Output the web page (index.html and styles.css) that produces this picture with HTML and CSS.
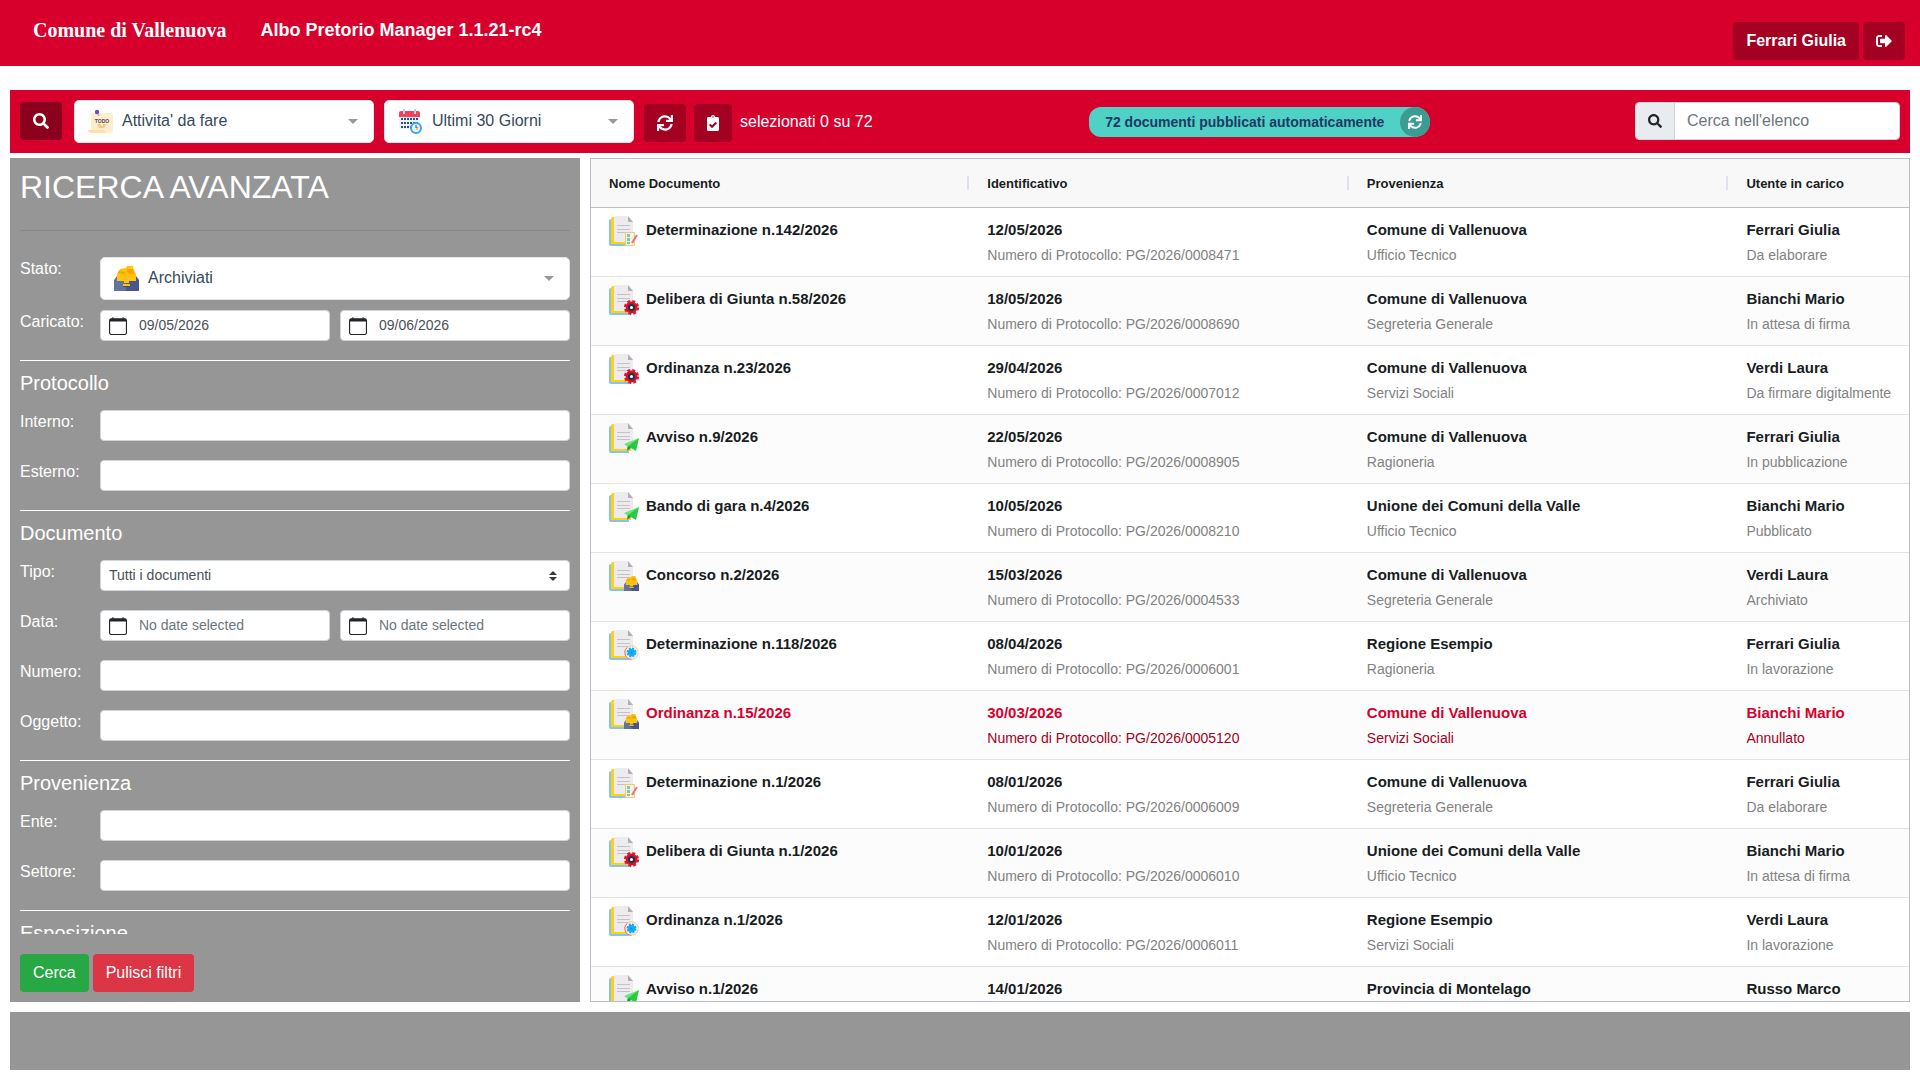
FILE: index.html
```html
<!DOCTYPE html>
<html lang="it">
<head>
    <meta charset="UTF-8">
    <meta name="viewport" content="width=device-width, initial-scale=1.0">
    <title>Albo Pretorio Manager</title>
    <link rel="stylesheet" href="styles.css">
</head>
<body>

<!-- icone condivise -->
<svg class="sprite" aria-hidden="true">
    <symbol id="i-search" viewBox="0 0 512 512">
        <path fill="currentColor" d="M505 442.700L405.300 343c-4.500-4.500-10.600-7-17-7H372c27.600-35.300 44-79.700 44-128C416 93.100 322.900 0 208 0S0 93.100 0 208s93.100 208 208 208c48.300 0 92.700-16.400 128-44v16.300c0 6.400 2.500 12.500 7 17l99.700 99.700c9.400 9.400 24.600 9.400 33.900 0l28.300-28.300c9.400-9.400 9.400-24.600.1-34zM208 336c-70.700 0-128-57.200-128-128 0-70.700 57.200-128 128-128 70.700 0 128 57.200 128 128 0 70.700-57.200 128-128 128z"/>
    </symbol>
    <symbol id="i-sync" viewBox="0 0 512 512">
        <path fill="currentColor" d="M440.650 12.570l4 82.770A247.160 247.160 0 0 0 255.830 8C134.730 8 33.910 94.920 12.290 209.820A12 12 0 0 0 24.090 224h49.050a12 12 0 0 0 11.670-9.260 175.910 175.910 0 0 1 317-56.940l-101.460-4.860a12 12 0 0 0-12.570 12v47.410a12 12 0 0 0 12 12H500a12 12 0 0 0 12-12V12a12 12 0 0 0-12-12h-47.370a12 12 0 0 0-11.980 12.570zM255.830 432a175.610 175.610 0 0 1-146-77.800l101.800 4.870a12 12 0 0 0 12.570-12v-47.400a12 12 0 0 0-12-12H12a12 12 0 0 0-12 12V500a12 12 0 0 0 12 12h47.350a12 12 0 0 0 12-12.600l-4.150-82.570A247.170 247.170 0 0 0 255.830 504c121.110 0 221.930-86.920 243.550-201.820a12 12 0 0 0-11.800-14.180h-49.050a12 12 0 0 0-11.670 9.260A175.860 175.860 0 0 1 255.830 432z"/>
    </symbol>
    <symbol id="i-clipboard" viewBox="0 0 384 512">
        <path fill="currentColor" d="M336 64h-80c0-35.300-28.700-64-64-64s-64 28.700-64 64H48C21.500 64 0 85.500 0 112v352c0 26.500 21.500 48 48 48h288c26.500 0 48-21.500 48-48V112c0-26.500-21.500-48-48-48zM192 40c13.300 0 24 10.700 24 24s-10.700 24-24 24-24-10.700-24-24 10.700-24 24-24zm121.200 231.800l-143 141.800c-4.700 4.700-12.300 4.600-17-.1l-82.600-83.300c-4.700-4.700-4.600-12.300.1-17L99.100 285c4.700-4.700 12.300-4.600 17 .1l46 46.400 106-105.200c4.700-4.700 12.300-4.600 17 .1l28.200 28.400c4.700 4.800 4.600 12.300-.1 17z"/>
    </symbol>
    <symbol id="i-logout" viewBox="0 0 512 512">
        <path fill="currentColor" d="M497 273L329 441c-15 15-41 4.500-41-17v-96H152c-13.300 0-24-10.700-24-24v-96c0-13.300 10.700-24 24-24h136V88c0-21.400 25.900-32 41-17l168 168c9.300 9.400 9.300 24.600 0 34zM192 436v-40c0-6.600-5.400-12-12-12H96c-17.700 0-32-14.300-32-32V160c0-17.700 14.300-32 32-32h84c6.600 0 12-5.400 12-12V76c0-6.600-5.400-12-12-12H96c-53 0-96 43-96 96v192c0 53 43 96 96 96h84c6.600 0 12-5.400 12-12z"/>
    </symbol>
    <symbol id="i-calendar" viewBox="0 0 16 16">
        <path fill="currentColor" d="M3.500 0a.5.500 0 0 1 .5.500V1h8V.500a.5.500 0 0 1 1 0V1h1a2 2 0 0 1 2 2v11a2 2 0 0 1-2 2H2a2 2 0 0 1-2-2V3a2 2 0 0 1 2-2h1V.500a.5.500 0 0 1 .5-.5zM1 4v10a1 1 0 0 0 1 1h12a1 1 0 0 0 1-1V4H1z"/>
    </symbol>
    <symbol id="i-month" viewBox="0 0 25 25">
        <path fill="#edf3fb" d="M1 7h21v13H1z"/>
        <path fill="#f4405a" d="M1 4q0-2 2-2h17q2 0 2 2v4H1z"/>
        <path fill="#a9d5f5" d="M5 0h2v5H5zM16 0h2v5h-2z"/>
        <path fill="none" stroke="#2f4e80" stroke-width="2" stroke-dasharray="2 1" d="M3 10h17M3 14h17M3 18h10"/>
        <circle cx="18" cy="19" r="5" fill="#e8f4ff" stroke="#3fa2f3" stroke-width="2"/>
        <path fill="none" stroke="#2f4e80" d="M18 16v3h2"/>
        <path fill="#f9c54a" d="M18 19h2v2h-2z"/>
    </symbol>
    <symbol id="i-archive" viewBox="0 0 25 25">
        <path fill="#ffc40c" d="M3 12V8l3-5 6-1 1-2h6v2l3 6v9H3z"/>
        <path fill="#ff9e00" d="M13 3h6l1 5h-4l-3-2zM5 5l6 1-1 2-6-1z"/>
        <path fill="#63739f" d="M0 14l3-4v5h7v2h3v8H0z"/>
        <path fill="#475690" d="M25 14l-3-4v5h-7v2h-3v8h13z"/>
        <path fill="#ffc40c" d="M9 18h7v2H9z"/>
        <path fill="#3d4b75" d="M9 20h7v1H9z"/>
    </symbol>
    <symbol id="i-doc" viewBox="0 0 30 30">
        <path fill="#82c4f2" d="M0 5q0-2 2-2h2v23h16v4H2q-2 0-2-2z"/>
        <path fill="#ffd015" d="M2 3q0-2 2-2h2v24h16v3H2z"/>
        <path fill="#edebee" d="M5 2q0-2 2-2h12l5 6v20H5z"/>
        <path fill="#b3aeb6" d="M19 0l5 6h-5z"/>
        <path fill="none" stroke="#c6c2c8" d="M8 9.500h13M8 13.500h13M8 16.500h13"/>
    </symbol>
    <symbol id="b-edit" viewBox="0 0 30 30">
        <path fill="#f7f2e7" stroke="#f1c778" d="M16.500 16.500h9v13h-9z"/>
        <path fill="none" stroke="#7dc9a4" stroke-width="3" stroke-dasharray="3 1" d="M19.500 18v10"/>
        <path fill="none" stroke="#ee7280" stroke-width="2" d="M28 19l-5 8"/>
    </symbol>
    <symbol id="b-gear" viewBox="0 0 30 30">
        <circle cx="22.500" cy="22.500" r="6.300" fill="none" stroke="#e5152f" stroke-width="2.500" stroke-dasharray="2.900 2.050"/>
        <circle cx="22.500" cy="22.500" r="5.900" fill="#d3142c"/>
        <circle cx="22.500" cy="22.500" r="2.500" fill="#fff" stroke="#1d3649" stroke-width="2"/>
    </symbol>
    <symbol id="b-send" viewBox="0 0 30 30">
        <path fill="#6be673" d="M30 15L15 21l4 3z"/>
        <path fill="#29c942" d="M30 15L19 23l-1 3 4-1 5 3z"/>
        <path fill="#1d9c34" d="M19 23l-1 5 4-3z"/>
    </symbol>
    <symbol id="b-archive" viewBox="0 0 30 30">
        <use href="#i-archive" x="15" y="15" width="15" height="15"/>
    </symbol>
    <symbol id="b-work" viewBox="0 0 30 30">
        <circle cx="22.500" cy="22.500" r="6.800" fill="#f7f3f2" stroke="#f5c795"/>
        <path fill="none" stroke="#ef7065" d="M18 17.500a6.800 6.800 0 0 0 4.500 11.800"/>
        <circle cx="22.500" cy="22.500" r="4" fill="none" stroke="#12aef5" stroke-width="2" stroke-dasharray="2 1.140"/>
        <circle cx="22.500" cy="22.500" r="3.800" fill="#12aef5"/>
        <circle cx="22.500" cy="22.500" r="1" fill="#2d7fd0"/>
    </symbol>
</svg>

<header class="topbar">
    <span class="ente">Comune di Vallenuova</span>
    <span class="app-name">Albo Pretorio Manager 1.1.21-rc4</span>
    <div class="user">
        <button type="button" class="btn btn-dark">Ferrari Giulia</button>
        <button type="button" class="btn btn-dark" aria-label="Esci"><svg class="icon"><use href="#i-logout"/></svg></button>
    </div>
</header>

<div class="page">
    <div class="toolbar">
        <button type="button" class="btn btn-dark btn-search" aria-label="Ricerca avanzata"><svg class="icon"><use href="#i-search"/></svg></button>
        <div class="dropdown dropdown-tasks">
            <svg class="dropdown-icon" viewBox="0 0 25 25">
                <path fill="#ffeecb" d="M3 4h19a3 3 0 0 1 3 3v15a2 2 0 0 1-2 2H3z"/>
                <path fill="#ffe0a0" d="M0 21h17q0 3 3 3H3q-3 0-3-3z"/>
                <path fill="#fbc78f" d="M10 15h3v2h2v-2h3v1l-2 3h-5l-2-3z"/>
                <path fill="#b9a4e6" d="M9 4l3 2-2 1z"/>
                <circle cx="9" cy="3" r="2.200" fill="#6a4bc3"/>
                <text x="14" y="14" text-anchor="middle" class="todo-text">TODO</text>
            </svg>
            <select id="tasks" aria-label="Attivita'">
                <option>Attivita' da fare</option>
            </select>
        </div>
        <div class="dropdown dropdown-period">
            <svg class="dropdown-icon"><use href="#i-month"/></svg>
            <select id="period" aria-label="Periodo">
                <option>Ultimi 30 Giorni</option>
            </select>
        </div>
        <div class="actions">
            <button type="button" class="btn btn-dark" aria-label="Aggiorna"><svg class="icon"><use href="#i-sync"/></svg></button>
            <button type="button" class="btn btn-dark" aria-label="Seleziona"><svg class="icon icon-narrow"><use href="#i-clipboard"/></svg></button>
            <span class="selected">selezionati 0 su 72</span>
        </div>
        <div class="published">
            <span class="published-text">72 documenti pubblicati automaticamente</span>
            <button type="button" class="published-btn" aria-label="Ricarica"><svg class="icon"><use href="#i-sync"/></svg></button>
        </div>
        <div class="list-search">
            <label for="listSearch" class="addon" aria-label="Cerca"><svg class="icon icon-small"><use href="#i-search"/></svg></label>
            <input type="text" id="listSearch" placeholder="Cerca nell'elenco">
        </div>
    </div>

    <div class="content">
        <form class="filters">
            <div class="filters-body">
                <h2>RICERCA AVANZATA</h2>
                <hr>
                <div class="field field-state">
                    <label for="stato">Stato:</label>
                    <div class="dropdown">
                        <svg class="dropdown-icon"><use href="#i-archive"/></svg>
                        <select id="stato">
                            <option>Archiviati</option>
                        </select>
                    </div>
                </div>
                <div class="field">
                    <label for="caricatoDa">Caricato:</label>
                    <div class="date"><svg><use href="#i-calendar"/></svg><input type="text" id="caricatoDa" value="09/05/2026"></div>
                    <div class="date"><svg><use href="#i-calendar"/></svg><input type="text" aria-label="Caricato al" value="09/06/2026"></div>
                </div>

                <h5>Protocollo</h5>
                <div class="field">
                    <label for="interno">Interno:</label>
                    <input type="text" id="interno">
                </div>
                <div class="field">
                    <label for="esterno">Esterno:</label>
                    <input type="text" id="esterno">
                </div>

                <h5>Documento</h5>
                <div class="field">
                    <label for="tipo">Tipo:</label>
                    <div class="custom-select">
                        <select id="tipo">
                            <option>Tutti i documenti</option>
                        </select>
                        <svg viewBox="0 0 4 5"><path fill="#343a40" d="M2 0L0 2h4zm0 5L0 3h4z"/></svg>
                    </div>
                </div>
                <div class="field">
                    <label for="dataDa">Data:</label>
                    <div class="date"><svg><use href="#i-calendar"/></svg><input type="text" id="dataDa" placeholder="No date selected"></div>
                    <div class="date"><svg><use href="#i-calendar"/></svg><input type="text" aria-label="Data al" placeholder="No date selected"></div>
                </div>
                <div class="field">
                    <label for="numero">Numero:</label>
                    <input type="text" id="numero">
                </div>
                <div class="field">
                    <label for="oggetto">Oggetto:</label>
                    <input type="text" id="oggetto">
                </div>

                <h5>Provenienza</h5>
                <div class="field">
                    <label for="enteProv">Ente:</label>
                    <input type="text" id="enteProv">
                </div>
                <div class="field">
                    <label for="settore">Settore:</label>
                    <input type="text" id="settore">
                </div>

                <h5>Esposizione</h5>
            </div>
            <div class="filters-buttons">
                <button type="submit" class="btn btn-success">Cerca</button>
                <button type="reset" class="btn btn-danger">Pulisci filtri</button>
            </div>
        </form>

        <div class="documents">
            <table id="documentsTable">
                <thead>
                    <tr>
                        <th class="col-name">Nome Documento</th>
                        <th class="col-data">Identificativo</th>
                        <th class="col-data">Provenienza</th>
                        <th>Utente in carico</th>
                    </tr>
                </thead>
                <tbody>

                </tbody>
            </table>
        </div>
    </div>

    <footer class="footer"></footer>
</div>

<script src="script.js"></script>

</body>
</html>
```
FILE: styles.css
```css
* {
    box-sizing: border-box;
}
body {
    margin: 0;
    height: 100vh;
    display: flex;
    flex-direction: column;
    overflow: hidden;
    font-family: "Liberation Sans", Arial, sans-serif;
    font-size: 16px;
    line-height: 24px;
    color: #212529;
    background-color: #fff;
}
button, input, select {
    font: inherit;
}
.sprite {
    display: none;
}
.icon {
    display: block;
    width: 16px;
    height: 16px;
}
.icon-narrow {
    width: 12px;
}
.icon-small {
    width: 14px;
    height: 14px;
}
.todo-text {
    font-size: 5px;
    font-weight: bold;
    fill: #53405f;
}

/* testata */
.topbar {
    display: flex;
    align-items: center;
    height: 66px;
    padding: 0 15px 6px 33px;
    background-color: #d7002d;
    color: #fff;
    font-weight: bold;
}
.ente {
    margin-right: 34px;
    font-family: "Liberation Serif", "Times New Roman", serif;
    font-size: 20px;
}
.app-name {
    font-size: 18px;
}
.user {
    display: flex;
    align-self: flex-end;
    gap: 4px;
    margin-left: auto;
}
.btn {
    display: flex;
    align-items: center;
    height: 38px;
    padding: 6px 13px;
    border: none;
    border-radius: 4px;
    color: #fff;
    cursor: pointer;
}
.btn-dark {
    background-color: #a30022;
    font-weight: bold;
}
.btn-search {
    background-color: #8b001d;
    margin: 0 12px 2px 0;
}
.btn-success {
    background-color: #28a745;
}
.btn-danger {
    background-color: #dc3545;
}

/* barra strumenti */
.page {
    flex: 1;
    min-height: 0;
    display: flex;
    flex-direction: column;
    padding: 24px 10px 10px;
}
.toolbar {
    display: flex;
    align-items: center;
    height: 63px;
    padding: 0 10px;
    background-color: #d7002d;
    color: #fff;
}
.dropdown {
    display: flex;
    align-items: center;
    position: relative;
    height: 43px;
    border: 1px solid #e2e5e8;
    border-radius: 5px;
    background-color: #fff;
}
.dropdown::after {
    content: "";
    position: absolute;
    right: 15px;
    top: 18px;
    border: 5px solid transparent;
    border-top-color: #999;
    border-bottom: none;
    pointer-events: none;
}
.dropdown-icon {
    position: absolute;
    left: 13px;
    top: 8px;
    width: 25px;
    height: 25px;
    pointer-events: none;
}
.dropdown select {
    appearance: none;
    width: 100%;
    height: 100%;
    padding: 0 30px 2px 47px;
    border: none;
    background: none;
    color: #35495e;
}
.dropdown-tasks {
    width: 300px;
    margin-right: 10px;
}
.dropdown-period {
    width: 250px;
    margin-right: 10px;
}
.actions {
    display: flex;
    align-items: center;
    gap: 8px;
    margin-right: 12px;
    padding-top: 2px;
}
.selected {
    padding-bottom: 2px;
}
.published {
    display: flex;
    align-items: center;
    height: 30px;
    margin: 0 auto;
    border-radius: 12px 15px 15px 12px;
    background-color: #4fd1c5;
}
.published-text {
    padding: 0 16px;
    color: #1f3a66;
    font-size: 14px;
    font-weight: bold;
}
.published-btn {
    display: flex;
    align-items: center;
    justify-content: center;
    width: 30px;
    height: 30px;
    padding: 0;
    border: none;
    border-radius: 15px;
    background-color: #3b9c93;
    color: #fff;
}
.published-btn .icon {
    width: 14px;
    height: 14px;
}
.list-search {
    display: flex;
    width: 265px;
    height: 38px;
    margin-bottom: 2px;
    border: 1px solid #ced4da;
    border-radius: 4px;
    overflow: hidden;
}
.addon {
    display: flex;
    align-items: center;
    padding: 0 12px;
    border-right: 1px solid #ced4da;
    background-color: #e9ecef;
    color: #212529;
}
.list-search input {
    flex: 1;
    min-width: 0;
    padding: 0 12px;
    border: none;
}
::placeholder {
    color: #6c757d;
    opacity: 1;
}

/* filtri */
.content {
    flex: 1;
    min-height: 0;
    display: grid;
    grid-template-columns: 30% 1fr;
    gap: 10px;
    margin: 5px 0 10px;
}
.filters {
    display: flex;
    flex-direction: column;
    min-height: 0;
    padding: 10px;
    background-color: #969696;
    color: #fff;
}
.filters-body {
    flex: 1;
    min-height: 0;
    overflow: hidden;
}
.filters h2 {
    margin: 0;
    font-size: 32px;
    font-weight: normal;
    line-height: 38px;
}
.filters hr {
    margin: 24px 0 26px;
    border: none;
    border-top: 1px solid #878787;
}
.filters h5 {
    margin: 0 0 15px;
    padding-top: 10px;
    border-top: 1px solid #fff;
    font-size: 20px;
    font-weight: normal;
    line-height: 24px;
}
.field {
    display: flex;
    gap: 10px;
    margin-bottom: 19px;
}
.field-state {
    margin-bottom: 10px;
}
.field > label {
    width: 70px;
}
.field > input, .date, .custom-select {
    flex: 1;
    min-width: 0;
    height: 31px;
    border: 1px solid #ced4da;
    border-radius: 4px;
    background-color: #fff;
}
.field .dropdown {
    flex: 1;
}
.date {
    display: flex;
    align-items: center;
    padding: 0 8px;
}
.date svg {
    width: 18px;
    height: 18px;
    margin-right: 12px;
    color: #212529;
}
.date input {
    flex: 1;
    min-width: 0;
    padding: 0 0 2px;
    border: none;
    background: none;
    color: #495057;
    font-size: 14px;
}
.date ::placeholder {
    color: #6c757d;
}
.custom-select {
    display: flex;
    align-items: center;
    position: relative;
}
.custom-select select {
    appearance: none;
    width: 100%;
    height: 100%;
    padding: 0 8px 2px;
    border: none;
    background: none;
    color: #495057;
    font-size: 14px;
}
.custom-select svg {
    position: absolute;
    right: 12px;
    width: 8px;
    height: 10px;
    pointer-events: none;
}
.filters-buttons {
    display: flex;
    gap: 4px;
    padding-top: 20px;
}

/* elenco documenti */
.documents {
    min-width: 0;
    min-height: 0;
    overflow: hidden;
    border: 1px solid #babfc7;
}
table {
    width: 100%;
    table-layout: fixed;
    border-collapse: separate;
    border-spacing: 0;
}
th {
    position: relative;
    height: 49px;
    padding: 2px 18px 0;
    border-bottom: 1px solid #babfc7;
    background-color: #f8f8f8;
    color: #181d1f;
    font-size: 13px;
    text-align: left;
}
.col-name {
    width: 28.7%;
}
.col-data {
    width: 28.8%;
}
th:not(:last-child)::after {
    content: "";
    position: absolute;
    right: 0;
    top: 17px;
    width: 2px;
    height: 14px;
    background-color: #dde2eb;
}
td {
    height: 69px;
    padding: 10px 18px 8px;
    border-bottom: 1px solid #dde2eb;
    vertical-align: top;
    white-space: nowrap;
    color: #181d1f;
    font-size: 15px;
}
tbody tr:nth-child(even) td {
    background-color: #fcfcfc;
}
td strong, td small {
    display: block;
    height: 25px;
}
td small {
    color: #828282;
    font-size: 14px;
}
.doc-name {
    display: flex;
    gap: 7px;
}
.doc-icon {
    width: 30px;
    height: 30px;
    margin-top: -2px;
}
.cancelled td strong {
    color: #d7002d;
}
.cancelled td small {
    color: #a30022;
}

.footer {
    height: 58px;
    background-color: #969696;
}
```
FILE: script.js
```javascript
const documents = [
    { icon: 'edit', name: 'Determinazione n.142/2026', date: '12/05/2026', protocol: '0008471', entity: 'Comune di Vallenuova', office: 'Ufficio Tecnico', user: 'Ferrari Giulia', state: 'Da elaborare' },
    { icon: 'gear', name: 'Delibera di Giunta n.58/2026', date: '18/05/2026', protocol: '0008690', entity: 'Comune di Vallenuova', office: 'Segreteria Generale', user: 'Bianchi Mario', state: 'In attesa di firma' },
    { icon: 'gear', name: 'Ordinanza n.23/2026', date: '29/04/2026', protocol: '0007012', entity: 'Comune di Vallenuova', office: 'Servizi Sociali', user: 'Verdi Laura', state: 'Da firmare digitalmente' },
    { icon: 'send', name: 'Avviso n.9/2026', date: '22/05/2026', protocol: '0008905', entity: 'Comune di Vallenuova', office: 'Ragioneria', user: 'Ferrari Giulia', state: 'In pubblicazione' },
    { icon: 'send', name: 'Bando di gara n.4/2026', date: '10/05/2026', protocol: '0008210', entity: 'Unione dei Comuni della Valle', office: 'Ufficio Tecnico', user: 'Bianchi Mario', state: 'Pubblicato' },
    { icon: 'archive', name: 'Concorso n.2/2026', date: '15/03/2026', protocol: '0004533', entity: 'Comune di Vallenuova', office: 'Segreteria Generale', user: 'Verdi Laura', state: 'Archiviato' },
    { icon: 'work', name: 'Determinazione n.118/2026', date: '08/04/2026', protocol: '0006001', entity: 'Regione Esempio', office: 'Ragioneria', user: 'Ferrari Giulia', state: 'In lavorazione' },
    { icon: 'archive', name: 'Ordinanza n.15/2026', date: '30/03/2026', protocol: '0005120', entity: 'Comune di Vallenuova', office: 'Servizi Sociali', user: 'Bianchi Mario', state: 'Annullato', cancelled: true },
    { icon: 'edit', name: 'Determinazione n.1/2026', date: '08/01/2026', protocol: '0006009', entity: 'Comune di Vallenuova', office: 'Segreteria Generale', user: 'Ferrari Giulia', state: 'Da elaborare' },
    { icon: 'gear', name: 'Delibera di Giunta n.1/2026', date: '10/01/2026', protocol: '0006010', entity: 'Unione dei Comuni della Valle', office: 'Ufficio Tecnico', user: 'Bianchi Mario', state: 'In attesa di firma' },
    { icon: 'work', name: 'Ordinanza n.1/2026', date: '12/01/2026', protocol: '0006011', entity: 'Regione Esempio', office: 'Servizi Sociali', user: 'Verdi Laura', state: 'In lavorazione' },
    { icon: 'send', name: 'Avviso n.1/2026', date: '14/01/2026', protocol: '0006012', entity: 'Provincia di Montelago', office: 'Ragioneria', user: 'Russo Marco', state: 'In pubblicazione' }
];

const tbody = document.querySelector('#documentsTable tbody');

documents.forEach(doc => {
    const row = document.createElement('tr');
    if (doc.cancelled) {
        row.className = 'cancelled';
    }
    row.innerHTML = `
        <td>
            <div class="doc-name">
                <svg class="doc-icon"><use href="#i-doc"/><use href="#b-${doc.icon}"/></svg>
                <strong>${doc.name}</strong>
            </div>
        </td>
        <td><strong>${doc.date}</strong><small>Numero di Protocollo: PG/2026/${doc.protocol}</small></td>
        <td><strong>${doc.entity}</strong><small>${doc.office}</small></td>
        <td><strong>${doc.user}</strong><small>${doc.state}</small></td>
    `;
    tbody.appendChild(row);
});
```
